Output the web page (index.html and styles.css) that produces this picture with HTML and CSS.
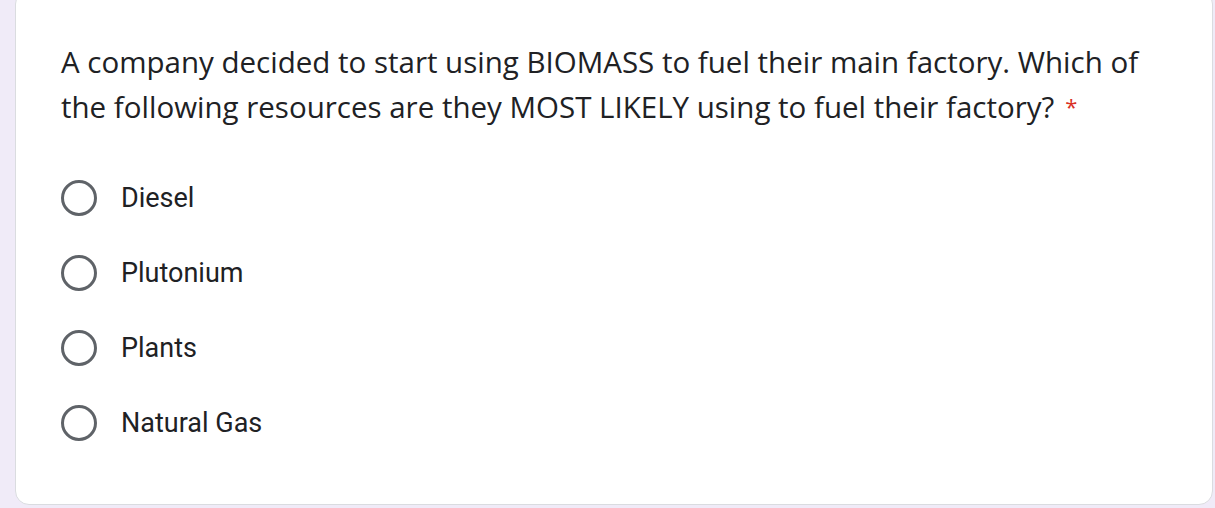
FILE: index.html
```html
<!DOCTYPE html>
<html lang="en">
<head>
<meta charset="utf-8">
<title>Question</title>
<link rel="stylesheet" href="styles.css">
</head>
<body>
<div class="page">
  <div class="card">
    <div class="title"><span class="q">A company decided to start using BIOMASS to fuel their main factory. Which of the following resources are they MOST LIKELY using to fuel their factory?</span><span class="req">*</span></div>
    <div class="options">
      <label class="option"><span class="radio"></span><span class="label">Diesel</span></label>
      <label class="option"><span class="radio"></span><span class="label">Plutonium</span></label>
      <label class="option"><span class="radio"></span><span class="label">Plants</span></label>
      <label class="option"><span class="radio"></span><span class="label">Natural Gas</span></label>
    </div>
  </div>
</div>
</body>
</html>
```
FILE: styles.css
```css
html, body {
  margin: 0;
  padding: 0;
  background: #f0ebf8;
  height: 508px;
  overflow: hidden;
}
.page {
  padding: 0 2px 0 15px;
}
.card {
  margin-top: -10px;
  height: 515px;
  box-sizing: border-box;
  background: #fff;
  border: 1px solid #dadce0;
  border-radius: 14px;
  padding: 48px 40px 0 45px;
}
.title {
  font-family: "Open Sans", sans-serif;
  font-size: 29.5px;
  line-height: 45px;
  color: #202124;
  max-width: 1100px;
}
.req {
  display: inline-block;
  color: #d93025;
  font-size: 22px;
  line-height: 22px;
  margin-left: 11px;
  vertical-align: 3px;
}
.options {
  margin-top: 31px;
  display: flex;
  flex-direction: column;
}
.option {
  display: flex;
  align-items: center;
  height: 75px;
}
.radio {
  width: 36px;
  height: 36px;
  box-sizing: border-box;
  border: 3.5px solid #5f6368;
  border-radius: 50%;
  flex: none;
}
.label {
  margin-left: 24px;
  font-family: Roboto, sans-serif;
  font-size: 27px;
  color: #202124;
}
```
